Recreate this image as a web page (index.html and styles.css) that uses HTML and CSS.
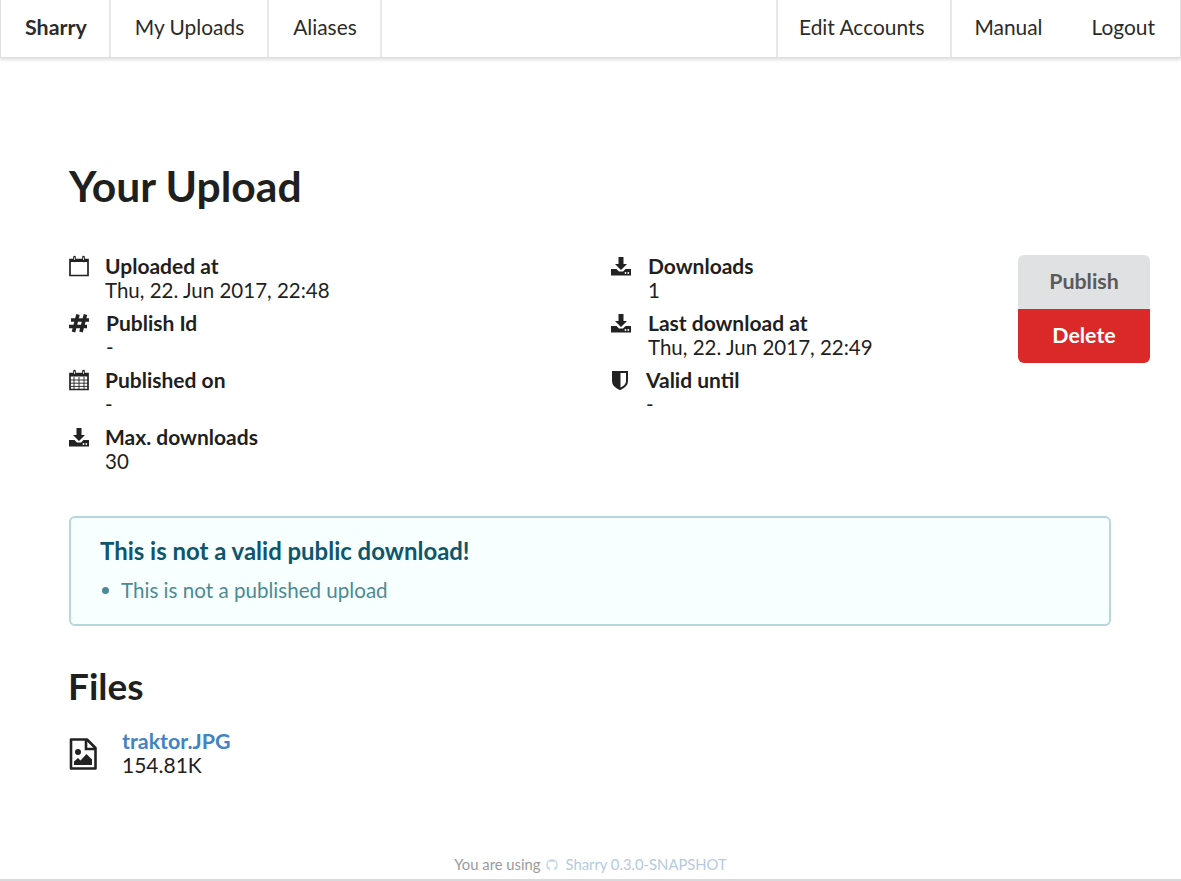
FILE: index.html
```html
<!DOCTYPE html>
<html lang="en">
<head>
  <meta charset="UTF-8" />
  <title>Sharry</title>
  <link rel="stylesheet" href="styles.css">
</head>
<body>

<nav class="menu">
  <a class="item brand">Sharry</a>
  <a class="item">My Uploads</a>
  <a class="item">Aliases</a>
  <div class="menu-right">
    <a class="item">Edit Accounts</a>
    <a class="item plain">Manual</a>
    <a class="item last">Logout</a>
  </div>
</nav>

<main class="page">
  <h1>Your Upload</h1>

  <div class="details">
    <div class="col">
      <div class="prop">
        <svg class="icon" viewBox="0 0 20 22"><path d="M1 4.500h18v16H1z" fill="none" stroke="#222" stroke-width="1.700"/><path d="M1 4.500h18v2.500H1z" fill="#222"/><path d="M5.500 2v4M14.500 2v4" stroke="#222" stroke-width="2.600" stroke-linecap="round"/><path d="M5.500 2.500v2.500M14.500 2.500v2.500" stroke="#fff" stroke-width="0.800"/></svg>
        <div><b>Uploaded at</b><span>Thu, 22. Jun 2017, 22:48</span></div>
      </div>
      <div class="prop">
        <svg class="icon hash" viewBox="0 0 20 22"><path d="M9 2.500 4.500 20M16.500 2.500 12 20M2 8h18M0 14.500h18" fill="none" stroke="#222" stroke-width="3.600"/></svg>
        <div><b>Publish Id</b><span>-</span></div>
      </div>
      <div class="prop">
        <svg class="icon" viewBox="0 0 20 22"><path d="M1 4.500h18v16H1z" fill="none" stroke="#222" stroke-width="1.700"/><path d="M1 4.500h18v3H1z" fill="#222"/><path d="M5.500 2v4M14.500 2v4" stroke="#222" stroke-width="2.600" stroke-linecap="round"/><path d="M5.500 2.500v2.500M14.500 2.500v2.500" stroke="#fff" stroke-width="0.800"/><path d="M5 8v12M10 8v12M15 8v12M1 11h18M1 14.200h18M1 17.400h18" stroke="#222" stroke-width="0.900"/></svg>
        <div><b>Published on</b><span>-</span></div>
      </div>
      <div class="prop">
        <svg class="icon" viewBox="0 0 20 22"><use href="#dl"/></svg>
        <div><b>Max. downloads</b><span>30</span></div>
      </div>
    </div>

    <div class="col col-right">
      <div class="prop">
        <svg class="icon" viewBox="0 0 20 22"><defs><g id="dl"><path d="M7.500 2h5v7h3.500L10 15 4 9h3.500z" fill="#222"/><path d="M0 14h5.500l2.500 2.500h4l2.500-2.500H20v6.500H0z" fill="#222"/><circle cx="14.500" cy="18" r="0.900" fill="#fff"/><circle cx="17.300" cy="18" r="0.900" fill="#fff"/></g></defs><use href="#dl"/></svg>
        <div><b>Downloads</b><span>1</span></div>
      </div>
      <div class="prop">
        <svg class="icon" viewBox="0 0 20 22"><use href="#dl"/></svg>
        <div><b>Last download at</b><span>Thu, 22. Jun 2017, 22:49</span></div>
      </div>
      <div class="prop">
        <svg class="icon shield" viewBox="0 0 18 22"><path d="M2 3h14v9c0 4-3.500 6.500-7 8-3.500-1.500-7-4-7-8z" fill="#fff" stroke="#222" stroke-width="2"/><path d="M2 3h7.500v17C5.500 18.500 2 16 2 12z" fill="#222"/></svg>
        <div><b>Valid until</b><span>-</span></div>
      </div>
    </div>

    <div class="buttons">
      <a class="btn grey">Publish</a>
      <a class="btn red">Delete</a>
    </div>
  </div>

  <div class="message">
    <div class="message-head">This is not a valid public download!</div>
    <ul>
      <li>This is not a published upload</li>
    </ul>
  </div>

  <h2>Files</h2>

  <div class="file">
    <svg class="file-icon" viewBox="0 0 28 32"><path d="M2 1.500h16l8.500 8.500v20.500H2z" fill="#fff" stroke="#222" stroke-width="2.600" stroke-linejoin="round"/><path d="M17 1.500V11h9.500" fill="none" stroke="#222" stroke-width="2.600"/><circle cx="9" cy="14" r="3" fill="#222"/><path d="M5 27v-3.500l4-3.500 2.500 2.500 6-6.500 5.500 5.500V27z" fill="#222"/></svg>
    <div><a class="file-name">traktor.JPG</a><span>154.81K</span></div>
  </div>
</main>

<footer class="foot">
  You are using
  <svg class="gh" viewBox="0 0 16 16"><path d="M8 1.500a6.500 6.500 0 0 0-2.500 12.500v-2.500c-1.500-.6-2.500-2-2.500-3.500 0-1 .4-1.800 1-2.500V3.500l2 1a6 6 0 0 1 4 0l2-1V5.500c.6.700 1 1.500 1 2.500 0 1.500-1 2.900-2.500 3.500V14A6.500 6.500 0 0 0 8 1.500z" fill="#c5d6e6"/></svg>
  <a>Sharry 0.3.0-SNAPSHOT</a>
</footer>

</body>
</html>
```

FILE: styles.css
```css
* {
  box-sizing: border-box;
}

body {
  font-family: Lato, "Open Sans", sans-serif;
  font-size: 20.500px;
  line-height: 24px;
  color: #1f1f1f;
  background: #fff;
  margin: 0;
  height: 881px;
  overflow: hidden;
  display: flex;
  flex-direction: column;
}

.menu {
  display: flex;
  height: 58px;
  border: 1px solid #dededf;
  border-top: none;
  box-shadow: 0 2px 3px rgba(34, 36, 38, 0.14);
  font-size: 20.900px;
}

.item {
  display: flex;
  align-items: center;
  padding: 0 23px 3px 24px;
  border-right: 2px solid #e8e8e9;
  color: #2b2b2b;
}

.brand {
  font-weight: 700;
  font-size: 21.400px;
  padding: 0 22px 3px 24px;
}

.menu-right {
  display: flex;
  margin-left: auto;
}

.menu-right .item:first-child {
  border-left: 2px solid #e8e8e9;
  padding: 0 26px 3px 21px;
}

.item.plain {
  border-right: none;
  padding: 0 25px 3px 22px;
}

.item.last {
  border-right: none;
  padding: 0 25px 3px 24px;
}

.page {
  flex: 1;
  padding: 0 31px 0 69px;
}

h1 {
  font-size: 42.600px;
  line-height: 48px;
  font-weight: 700;
  margin: 104px 0 0;
}

.details {
  display: grid;
  grid-template-columns: 542px 407px 132px;
  margin-top: 45px;
  height: 249px;
}

.prop {
  display: flex;
  height: 57px;
}

.prop div {
  margin-top: -1px;
}

.prop b {
  display: block;
  font-size: 21px;
  font-weight: 700;
}

.prop span {
  display: block;
}

.icon {
  width: 20px;
  height: 22px;
  margin-right: 16px;
  flex-shrink: 0;
}

.col-right .icon {
  margin-right: 17px;
}

.icon.hash {
  margin-right: 17px;
}

.col-right .icon.shield {
  width: 18px;
  margin-right: 17px;
}

.buttons {
  display: flex;
  flex-direction: column;
  width: 132px;
}

.btn {
  height: 54px;
  display: flex;
  align-items: center;
  justify-content: center;
  font-size: 21.400px;
  font-weight: 700;
  padding-bottom: 2px;
}

.grey {
  background: #e0e1e2;
  color: #5a5a5b;
  border-radius: 6px 6px 0 0;
}

.red {
  background: #db2828;
  color: #fff;
  border-radius: 0 0 6px 6px;
}

.message {
  width: 1042px;
  height: 110px;
  margin-top: 12px;
  padding: 21px 29px 0;
  background: #f8ffff;
  border: 2px solid #b5d9da;
  border-radius: 6px;
  color: #4b8a94;
}

.message-head {
  font-size: 23.950px;
  font-weight: 700;
  color: #0e566c;
}

.message ul {
  margin: 15px 0 0;
  padding: 0;
  list-style: none;
  font-size: 20.600px;
}

.message li {
  display: flex;
  align-items: center;
  gap: 12px;
}

.message li::before {
  content: "";
  width: 7px;
  height: 7px;
  margin-left: 2px;
  border-radius: 50%;
  background: #4b8a94;
}

h2 {
  font-size: 37px;
  line-height: 40px;
  font-weight: 700;
  margin: 40px 0 0 -1px;
}

.file {
  display: flex;
  margin-top: 23px;
}

.file span {
  display: block;
  font-size: 21px;
}

.file-icon {
  width: 28px;
  height: 32px;
  margin: 9px 25px 0 0;
}

.file-name {
  display: block;
  font-size: 21.400px;
  font-weight: 700;
  color: #4183c4;
}

.foot {
  height: 31px;
  border-bottom: 2px solid #d9dadb;
  display: flex;
  justify-content: center;
  align-items: flex-start;
  gap: 4px;
  font-size: 14.800px;
  line-height: 18px;
  color: #9a9a9a;
  padding-top: 5px;
}

.foot a {
  color: #b5cade;
  margin-left: 3px;
}

.gh {
  width: 14px;
  height: 14px;
  margin-top: 3px;
}
```
